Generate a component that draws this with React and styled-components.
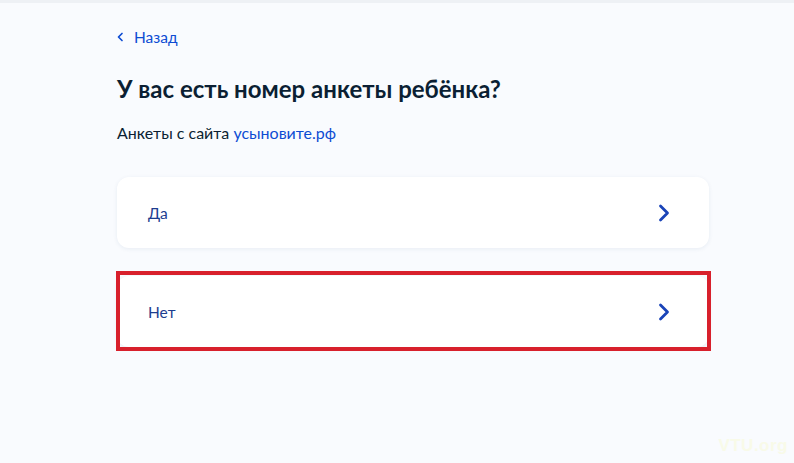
import React from "react"
import styled, { createGlobalStyle } from "styled-components"

const GlobalStyle = createGlobalStyle`
  html, body {
    margin: 0;
    padding: 0;
    background: #f9fbfe;
    font-family: Lato, "Noto Sans", sans-serif;
  }
`

const Page = styled.div`
  position: relative;
  width: 794px;
  height: 463px;
  overflow: hidden;
  background: #f9fbfe;
  border-top: 3px solid #eef1f5;
  box-sizing: border-box;
`

const Content = styled.div`
  width: 592px;
  padding: 24px 0 0 117px;
  display: flex;
  flex-direction: column;
`

const Back = styled.a`
  display: flex;
  align-items: center;
  gap: 10px;
  color: #0d4cd3;
  font-size: 15.5px;
  line-height: 20px;
  text-decoration: none;
  height: 20px;
`

const Title = styled.h1`
  margin: 27px 0 0;
  font-size: 24px;
  line-height: 30px;
  font-weight: 700;
  color: #0b1f33;
`

const Subtitle = styled.p`
  margin: 18px 0 0;
  font-size: 16px;
  line-height: 22px;
  color: #0b1f33;

  & a {
    color: #0d4cd3;
    text-decoration: none;
  }
`

const Options = styled.div`
  margin-top: 33px;
  display: flex;
  flex-direction: column;
  gap: 28px;
`

const Option = styled.button`
  position: relative;
  display: flex;
  align-items: center;
  justify-content: space-between;
  width: 592px;
  height: 71px;
  padding: 0 38px 0 31px;
  box-sizing: border-box;
  border: none;
  border-radius: 12px;
  background: #fff;
  box-shadow: 0 1px 4px rgba(26, 59, 120, 0.08);
  font-family: inherit;
  font-size: 15.5px;
  color: #1d3d8f;
  cursor: pointer;
  text-align: left;

  ${({ $marked }) =>
    $marked &&
    `
    &::after {
      content: "";
      position: absolute;
      inset: -5px -2px -4px -1px;
      border: 4px solid #d8202c;
      pointer-events: none;
    }
  `}
`

const Watermark = styled.div`
  position: absolute;
  right: 6px;
  bottom: 7px;
  font-family: "Liberation Sans", sans-serif;
  font-size: 17px;
  font-weight: 700;
  color: #f8fae8;
  letter-spacing: 0.5px;
`

const Chevron = () => (
  <svg width="14" height="18" viewBox="0 0 14 18" fill="none">
    <path
      d="M3.5 2 L10.5 9 L3.5 16"
      stroke="#1a44b8"
      strokeWidth="2.8"
      strokeLinecap="round"
      strokeLinejoin="round"
    />
  </svg>
)

const BackChevron = () => (
  <svg width="7" height="10" viewBox="0 0 7 10" fill="none">
    <path
      d="M5 1.5 L1.5 5 L5 8.5"
      stroke="#0d4cd3"
      strokeWidth="1.7"
      strokeLinecap="round"
      strokeLinejoin="round"
    />
  </svg>
)

const App = () => {
  const options = [
    { label: "Да", marked: false },
    { label: "Нет", marked: true },
  ]

  return (
    <Page>
      <GlobalStyle />
      <Content>
        <Back href="#">
          <BackChevron />
          Назад
        </Back>
        <Title>У вас есть номер анкеты ребёнка?</Title>
        <Subtitle>
          Анкеты с сайта <a href="#">усыновите.рф</a>
        </Subtitle>
        <Options>
          {options.map(o => (
            <Option key={o.label} $marked={o.marked}>
              {o.label}
              <Chevron />
            </Option>
          ))}
        </Options>
      </Content>
      <Watermark>VTU.org</Watermark>
    </Page>
  )
}

export default App
